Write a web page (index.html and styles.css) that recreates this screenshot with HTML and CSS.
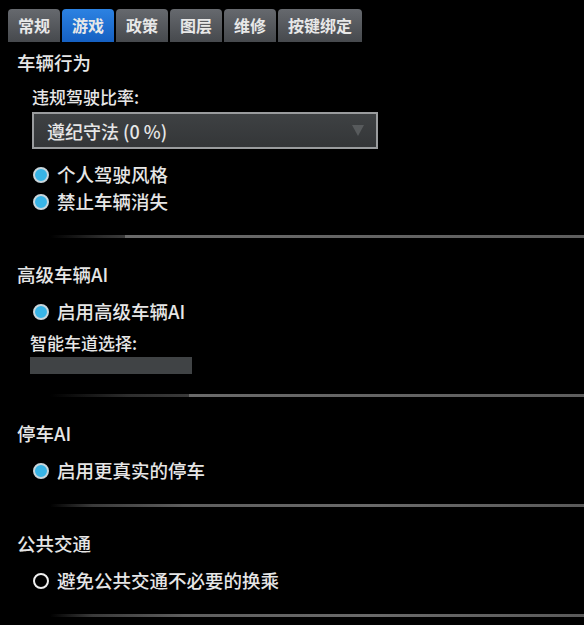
FILE: index.html
```html
<!DOCTYPE html>
<html lang="zh-CN">
<head>
  <meta charset="UTF-8" />
  <title>游戏设置</title>
  <link rel="stylesheet" href="styles.css">
</head>
<body>

<!-- Tabs -->
<div class="tabs">
  <div class="tab">常规</div>
  <div class="tab active">游戏</div>
  <div class="tab">政策</div>
  <div class="tab">图层</div>
  <div class="tab">维修</div>
  <div class="tab">按键绑定</div>
</div>

<!-- Vehicle behaviour -->
<div class="section first">
  <div class="heading">车辆行为</div>
  <div class="label">违规驾驶比率:</div>
  <div class="dropdown">
    <span>遵纪守法 (0 %)</span>
    <span class="arrow"></span>
  </div>
  <div class="options">
    <div class="radio checked">个人驾驶风格</div>
    <div class="radio checked">禁止车辆消失</div>
  </div>
</div>
<div class="separator step-1"></div>

<!-- Advanced AI -->
<div class="section">
  <div class="heading">高级车辆AI</div>
  <div class="options">
    <div class="radio checked">启用高级车辆AI</div>
  </div>
  <div class="label lane">智能车道选择:</div>
  <div class="slider"></div>
</div>
<div class="separator step-2"></div>

<!-- Parking AI -->
<div class="section">
  <div class="heading">停车AI</div>
  <div class="options">
    <div class="radio checked">启用更真实的停车</div>
  </div>
</div>
<div class="separator"></div>

<!-- Public transport -->
<div class="section">
  <div class="heading">公共交通</div>
  <div class="options">
    <div class="radio">避免公共交通不必要的换乘</div>
  </div>
</div>
<div class="separator"></div>

</body>
</html>
```

FILE: styles.css
```css
:root {
  --text: #e6e6e6;
  --tab-top: #66696e;
  --tab-bottom: #46494d;
  --blue-top: #2c82e2;
  --blue-bottom: #1560c2;
  --check: #38b4e6;
  --line: #6a6a6a;
}

* {
  box-sizing: border-box;
}

body {
  margin: 0;
  background-color: #000;
  color: var(--text);
  font-family: "Noto Sans CJK SC", "Liberation Sans", sans-serif;
  font-weight: 500;
  overflow: hidden;
}

.tabs {
  display: flex;
  gap: 2px;
  padding: 9px 0 0 8px;
}

.tab {
  height: 33px;
  line-height: 33px;
  padding: 0 10px;
  font-size: 16px;
  font-weight: 700;
  color: #e8e8e8;
  background: linear-gradient(var(--tab-top), var(--tab-bottom));
  border-radius: 4px 4px 0 0;
}

.tab.active {
  background: linear-gradient(var(--blue-top), var(--blue-bottom));
}

.section {
  padding-left: 17px;
  margin-top: 24px;
}

.section.first {
  margin-top: 8px;
}

.heading {
  font-size: 18.5px;
  line-height: 24px;
}

.label {
  font-size: 17px;
  line-height: 24px;
  margin: 11px 0 0 15px;
}

.label.lane {
  margin: 6px 0 0 13px;
}

.dropdown {
  display: flex;
  align-items: center;
  justify-content: space-between;
  width: 346px;
  height: 37px;
  margin: 3px 0 0 15px;
  padding: 0 12px 0 13px;
  font-size: 18px;
  background: linear-gradient(#3e4143, #343638);
  border: 2px solid #9a9c9e;
}

.arrow {
  width: 0;
  height: 0;
  border-left: 6px solid transparent;
  border-right: 6px solid transparent;
  border-top: 11px solid #575a5c;
}

.options {
  margin-top: 12px;
  padding-left: 16px;
}

.radio {
  display: flex;
  align-items: center;
  gap: 8px;
  font-size: 18.5px;
  line-height: 27px;
}

.radio::before {
  content: "";
  width: 12px;
  height: 12px;
  border-radius: 50%;
  border: 2px solid #f0f0f0;
  background: #000;
}

.radio.checked::before {
  border-color: #c9d6dc;
  background: var(--check);
}

.slider {
  width: 162px;
  height: 17px;
  margin: 2px 0 0 13px;
  background: #404345;
}

.separator {
  height: 3px;
  margin: 20px 0 0 50px;
  background: linear-gradient(to right, transparent, #3a3a3a 8%, #5e5e5e 25%, var(--line) 60%, #5a5a5a);
}

.separator.step-1 {
  background: linear-gradient(to right, transparent, #2e2e2e 10%, #3a3a3a 14%, var(--line) 14%, #5e5e5e);
}

.separator.step-2 {
  background: linear-gradient(to right, transparent, #2e2e2e 15%, #3a3a3a 26%, var(--line) 26%, #5e5e5e);
}
```
